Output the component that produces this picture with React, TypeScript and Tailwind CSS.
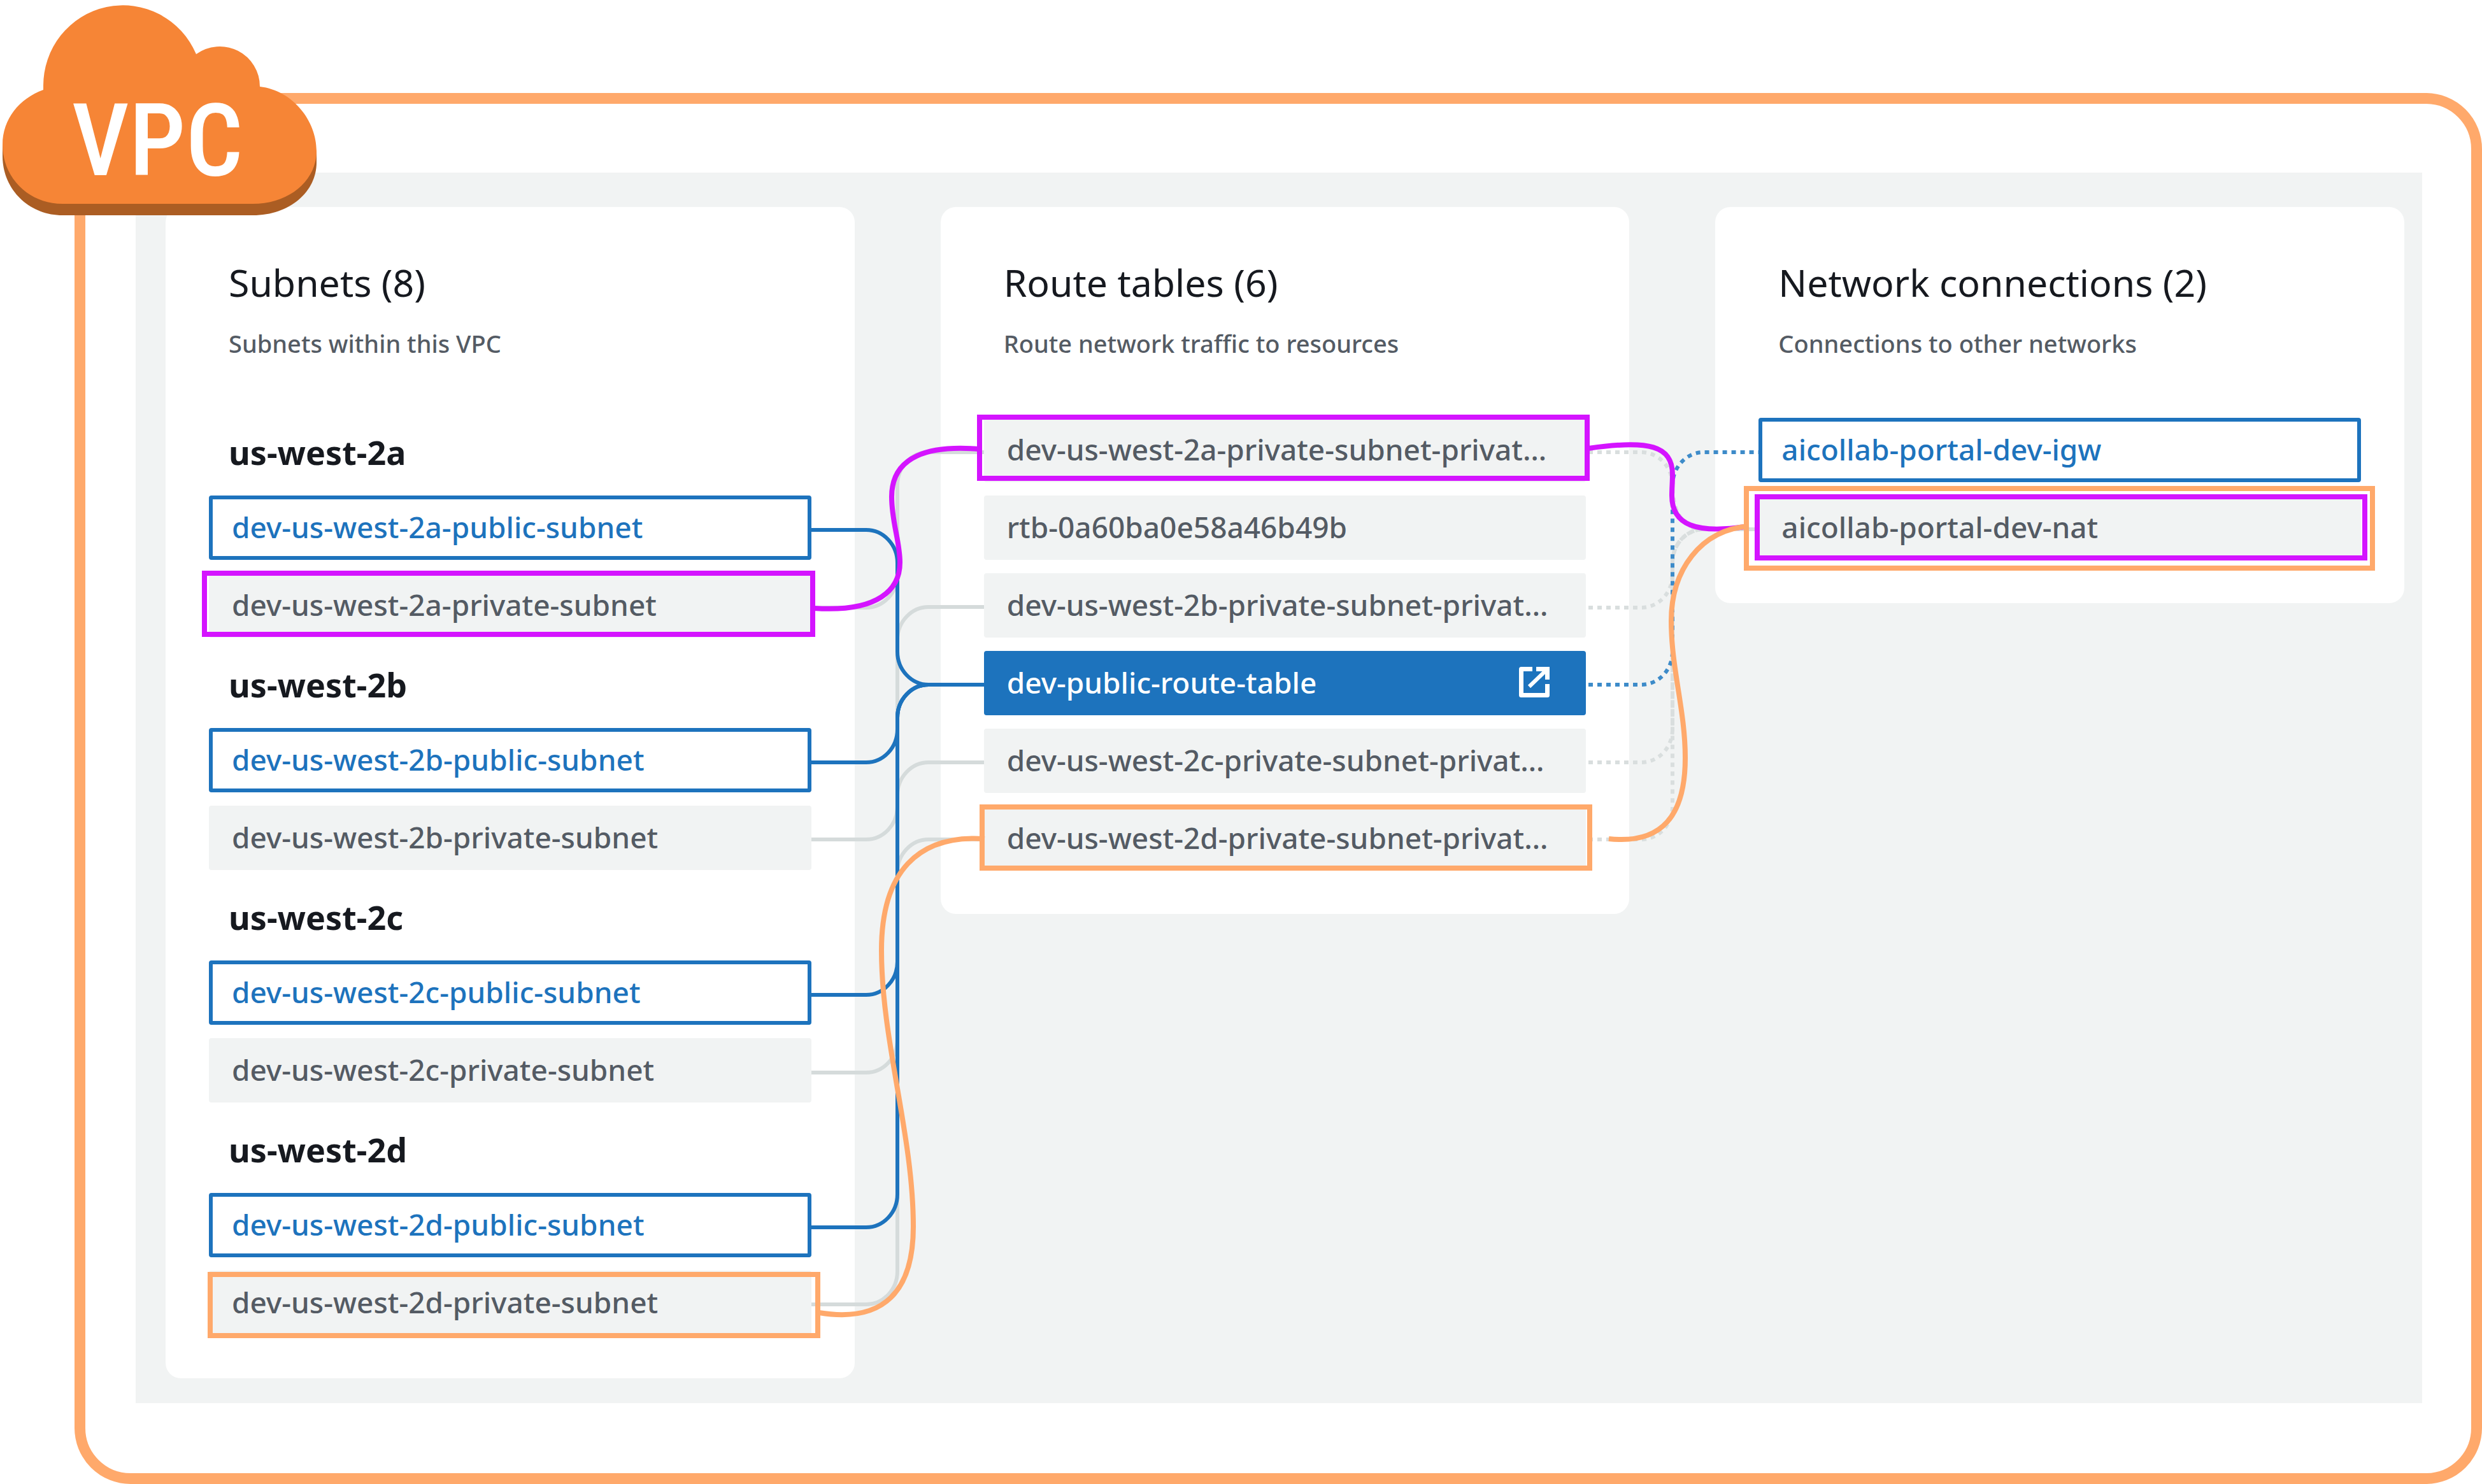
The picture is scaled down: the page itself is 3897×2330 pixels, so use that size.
import React from "react";

type Tone = "muted" | "linked" | "selected";
type Item = { name: string; tone: Tone };

const zones = ["2a", "2b", "2c", "2d"];

const routeTables: Item[] = [
  { name: "dev-us-west-2a-private-subnet-privat…", tone: "muted" },
  { name: "rtb-0a60ba0e58a46b49b", tone: "muted" },
  { name: "dev-us-west-2b-private-subnet-privat…", tone: "muted" },
  { name: "dev-public-route-table", tone: "selected" },
  { name: "dev-us-west-2c-private-subnet-privat…", tone: "muted" },
  { name: "dev-us-west-2d-private-subnet-privat…", tone: "muted" },
];

const connections: Item[] = [
  { name: "aicollab-portal-dev-igw", tone: "linked" },
  { name: "aicollab-portal-dev-nat", tone: "muted" },
];

const tones: Record<Tone, string> = {
  muted: "border-[#f1f3f3] bg-[#f1f3f3] text-[#545b64]",
  linked: "border-[#1d73bd] bg-white text-[#1d73bd]",
  selected: "border-[#1d73bd] bg-[#1d73bd] text-white",
};

function ExternalIcon() {
  return (
    <svg viewBox="0 0 48 48" className="mr-4 h-12 w-12 shrink-0" fill="none" stroke="currentColor" strokeWidth="7" aria-hidden="true">
      <path d="M21 3.5H3.5V44.5H44.5V27" strokeLinejoin="round" />
      <path d="M27 3.5H44.5V20" />
      <path d="M16 31L42 6" strokeWidth="6" />
    </svg>
  );
}

function Row({ item }: { item: Item }) {
  return (
    <li>
      <button
        type="button"
        className={`flex w-full items-center justify-between rounded-[4px] border-6 pb-[3px] pl-[30px] pr-[35px] text-left text-[46px] font-medium leading-[86px] ${tones[item.tone]}`}
      >
        <span className="truncate">{item.name}</span>
        {item.tone === "selected" && <ExternalIcon />}
      </button>
    </li>
  );
}

function Card({ title, note, children }: { title: string; note: string; children: React.ReactNode }) {
  return (
    <section className="min-w-0 rounded-3xl bg-white px-[68px] pb-[68px]">
      <header className="px-[31px] pb-[73px] pt-[78px]">
        <h2 className="whitespace-nowrap text-[59px] leading-[80px] text-[#16191f]">{title}</h2>
        <p className="mt-8 whitespace-nowrap text-[38px] font-medium leading-[48px] text-[#545b64]">{note}</p>
      </header>
      {children}
    </section>
  );
}

function Rows({ items }: { items: Item[] }) {
  return (
    <ul className="flex flex-col gap-[21px]">
      {items.map((item) => (
        <Row key={item.name} item={item} />
      ))}
    </ul>
  );
}

/* Subnet to route table link: out of the row, along the trunk, into the table. */
function solidLink(from: number, to: number) {
  const d = to > from ? 1 : -1;
  const s1 = d > 0 ? 1 : 0;
  return `M1274 ${from}H1360A49 52 0 0 ${s1} 1409 ${from + d * 52}V${to - d * 52}A49 52 0 0 ${1 - s1} 1458 ${to}H1545`;
}

/* Route table to network connection link. */
function dottedLink(from: number, to: number) {
  const d = to > from ? 1 : -1;
  const s1 = d > 0 ? 1 : 0;
  return `M2494 ${from}H2577A49 52 0 0 ${s1} 2626 ${from + d * 52}V${to - d * 52}A49 52 0 0 ${1 - s1} 2675 ${to}H2761`;
}

function Links() {
  return (
    <svg
      viewBox="0 0 3897 2330"
      preserveAspectRatio="none"
      className="pointer-events-none absolute inset-0 h-full w-full"
      fill="none"
      aria-hidden="true"
    >
      <g stroke="#d5dbdb" strokeWidth="6">
        <path d={solidLink(954, 710)} />
        <path d={solidLink(1318, 953)} />
        <path d={solidLink(1684, 1197)} />
        <path d={solidLink(2048, 1318)} />
      </g>
      <g stroke="#1d73bd" strokeWidth="6">
        <path d={solidLink(832, 1075)} />
        <path d={solidLink(1197, 1075)} />
        <path d={solidLink(1562, 1075)} />
        <path d={solidLink(1927, 1075)} />
      </g>
      <g stroke="#d9dede" strokeWidth="6" strokeDasharray="7 7">
        <path d="M2494 710H2577A49 52 0 0 1 2626 762C2626 800 2640 831 2675 831H2761" />
        <path d={dottedLink(954, 831)} />
        <path d={dottedLink(1197, 831)} />
        <path d={dottedLink(1318, 831)} />
      </g>
      <path d={dottedLink(1075, 710)} stroke="#3d8bc9" strokeWidth="6" strokeDasharray="7 7" />

      <g stroke="#d414ff" strokeWidth="8">
        <rect x="321" y="900" width="955" height="96" />
        <rect x="1538" y="655" width="954" height="96" />
        <rect x="2759" y="780" width="954" height="96" />
        <path d="M1278 955C1380 962 1413 925 1413 883C1413 850 1400 820 1400 780C1400 715 1460 699 1536 705" />
        <path d="M2494 704C2590 690 2626 700 2626 745C2626 757 2625 766 2625 778C2625 825 2664 838 2740 827" />
      </g>
      <g stroke="#ffa96b" strokeWidth="8">
        <rect x="330" y="2001" width="954" height="96" />
        <rect x="1542" y="1267" width="954" height="96" />
        <rect x="2742" y="767" width="983" height="125" />
        <path d="M1286 2061C1390 2078 1434 2025 1434 1926C1434 1782 1384 1636 1384 1492C1384 1370 1440 1310 1546 1317" />
        <path d="M2526 1317C2610 1326 2646 1280 2646 1190C2646 1115 2624 1050 2624 975C2624 895 2670 832 2746 826" />
      </g>
    </svg>
  );
}

function VpcBadge() {
  return (
    <div className="absolute left-0 top-0 h-[340px] w-[500px]">
      <svg viewBox="0 0 500 340" className="h-full w-full" role="img" aria-label="VPC">
        <path fill="#ab5d23" d="M4 227V245C4 298 46 338 98 338H397C455 338 497 301 497 255V237Z" />
        <path
          fill="#f68536"
          d="M68 141V136A125 126 0 0 1 308 85A63 63 0 0 1 408 136C460 142 497 190 497 237C497 283 455 320 397 320H98C46 320 4 280 4 227C4 187 30 155 68 141Z"
        />
        <text x="247" y="275" textAnchor="middle" fill="#ffffff" fontFamily="'Roboto Condensed', 'Open Sans Condensed', sans-serif" fontSize="158" fontWeight="500">
          VPC
        </text>
      </svg>
    </div>
  );
}

export default function App() {
  return (
    <main className="relative bg-white pl-[117px] pt-[146px] font-['Noto_Sans',sans-serif]">
      <div className="rounded-[88px] border-[17px] border-[#ffa96b] pb-[110px] pl-[79px] pr-[77px] pt-[108px]">
        <div className="grid grid-cols-3 items-start gap-[135px] bg-[#f1f3f3] pb-[39px] pl-[47px] pr-7 pt-[54px]">
          <Card title="Subnets (8)" note="Subnets within this VPC">
            {zones.map((zone) => (
              <div key={zone}>
                <h3 className="px-[31px] pb-8 pt-[38px] text-[52px] font-bold leading-[72px] text-[#16191f]">us-west-{zone}</h3>
                <Rows
                  items={[
                    { name: `dev-us-west-${zone}-public-subnet`, tone: "linked" },
                    { name: `dev-us-west-${zone}-private-subnet`, tone: "muted" },
                  ]}
                />
              </div>
            ))}
          </Card>
          <Card title="Route tables (6)" note="Route network traffic to resources">
            <div className="mt-5">
              <Rows items={routeTables} />
            </div>
          </Card>
          <Card title="Network connections (2)" note="Connections to other networks">
            <div className="mt-5">
              <Rows items={connections} />
            </div>
          </Card>
        </div>
      </div>
      <Links />
      <VpcBadge />
    </main>
  );
}
